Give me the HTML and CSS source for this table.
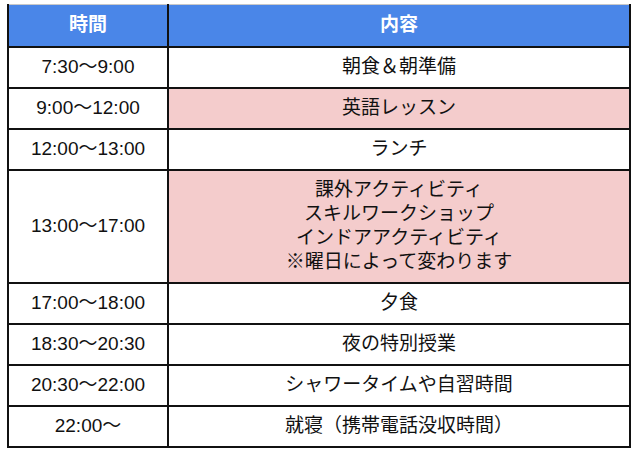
FILE: index.html
```html
<!DOCTYPE html>
<html lang="ja">
<head>
<meta charset="utf-8">
<link rel="stylesheet" href="styles.css">
</head>
<body>
<div class="wrap">
<table class="schedule">
  <colgroup><col class="c-time"><col class="c-body"></colgroup>
  <thead>
    <tr><th>時間</th><th>内容</th></tr>
  </thead>
  <tbody>
    <tr><td>7:30〜9:00</td><td>朝食＆朝準備</td></tr>
    <tr class="pink"><td>9:00〜12:00</td><td>英語レッスン</td></tr>
    <tr><td>12:00〜13:00</td><td>ランチ</td></tr>
    <tr class="pink tall"><td>13:00〜17:00</td><td>課外アクティビティ<br>スキルワークショップ<br>インドアアクティビティ<br>※曜日によって変わります</td></tr>
    <tr><td>17:00〜18:00</td><td>夕食</td></tr>
    <tr><td>18:30〜20:30</td><td>夜の特別授業</td></tr>
    <tr><td>20:30〜22:00</td><td>シャワータイムや自習時間</td></tr>
    <tr><td>22:00〜</td><td>就寝（携帯電話没収時間）</td></tr>
  </tbody>
</table>
</div>
</body>
</html>
```

FILE: styles.css
```css
html, body {
  margin: 0;
  padding: 0;
  background: #ffffff;
}
.wrap {
  padding: 4px 0 0 7px;
}
.schedule {
  border-collapse: collapse;
  width: 624px;
  table-layout: fixed;
  font-family: "Liberation Sans", "Noto Sans CJK JP", sans-serif;
  font-size: 19px;
  color: #111;
}
.c-time { width: 160px; }
.schedule th, .schedule td {
  border: 2px solid #111;
  text-align: center;
  vertical-align: middle;
  padding: 0;
  line-height: 24px;
}
.schedule thead tr {
  height: 42px;
}
.schedule th {
  background: #4a86e8;
  color: #fff;
  font-weight: bold;
  border-top: 1px solid #c8c8c8;
}
.schedule tbody tr {
  height: 41px;
}
.schedule tbody tr.tall {
  height: 113px;
}
.schedule tr.pink td:nth-child(2) {
  background: #f4cccc;
}
```
